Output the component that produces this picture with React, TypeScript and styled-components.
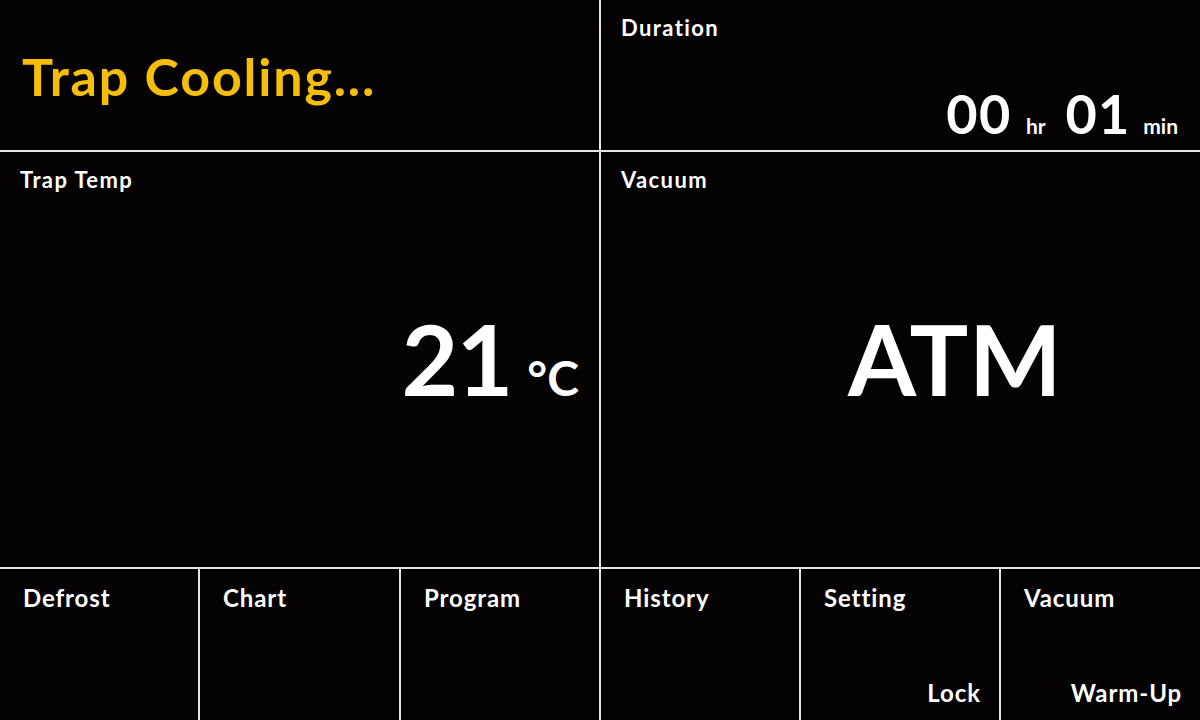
import styled, { createGlobalStyle } from 'styled-components';

const GlobalStyle = createGlobalStyle`
  html, body {
    margin: 0;
    padding: 0;
    background: #040203;
  }
  body {
    font-family: 'Lato', 'Noto Sans', sans-serif;
  }
`;

const Screen = styled.div`
  width: 1200px;
  height: 720px;
  display: grid;
  grid-template-columns: 599px 599px;
  grid-template-rows: 150px 415px 151px;
  gap: 2px;
  background: #e6e6e6;
  overflow: hidden;
`;

const Panel = styled.div<{ $bottom?: number }>`
  background: #040203;
  display: flex;
  flex-direction: column;
  padding: 15px 20px ${(p) => p.$bottom ?? 18}px 20px;
  box-sizing: border-box;
  color: #fff;
`;

const Label = styled.div`
  font-size: 22px;
  font-weight: 700;
  line-height: 1.2;
  letter-spacing: 1.4px;
`;

const Status = styled.div`
  flex: 1;
  display: flex;
  align-items: center;
  padding: 4px 0 0 2px;
  color: #f5bd0c;
  font-size: 52px;
  font-weight: 700;
  letter-spacing: 1.8px;
`;

const ReadingRow = styled.div`
  flex: 1;
  display: flex;
  align-items: baseline;
  justify-content: flex-end;
  align-content: flex-end;
  flex-wrap: wrap;
  line-height: 1;
`;

const Big = styled.span<{ $size: number; $spacing?: number }>`
  font-size: ${(p) => p.$size}px;
  font-weight: 700;
  letter-spacing: ${(p) => p.$spacing ?? 0}px;
`;

const Unit = styled.span<{ $size: number; $left: number; $right: number }>`
  font-size: ${(p) => p.$size}px;
  font-weight: 700;
  margin: 0 ${(p) => p.$right}px 0 ${(p) => p.$left}px;
`;

const Centered = styled.div<{ $pad: string }>`
  flex: 1;
  display: flex;
  align-items: center;
  justify-content: flex-end;
  padding: ${(p) => p.$pad};
`;

const TempValue = styled.div`
  display: flex;
  align-items: baseline;
  line-height: 1;
`;

const ButtonRow = styled.div`
  grid-column: 1 / span 2;
  display: grid;
  grid-template-columns: 198px 199px 198px 198px 198px 199px;
  gap: 2px;
`;

const Button = styled.div`
  background: #040203;
  color: #fff;
  display: flex;
  flex-direction: column;
  justify-content: space-between;
  padding: 15px 18px 12px 23px;
  box-sizing: border-box;
`;

const ButtonText = styled.div<{ $right?: boolean }>`
  font-size: 24px;
  font-weight: 700;
  line-height: 1.2;
  letter-spacing: 0.9px;
  text-align: ${(p) => (p.$right ? 'right' : 'left')};
`;

const buttons = [
  { title: 'Defrost' },
  { title: 'Chart' },
  { title: 'Program' },
  { title: 'History' },
  { title: 'Setting', sub: 'Lock' },
  { title: 'Vacuum', sub: 'Warm-Up' },
];

export default function App() {
  return (
    <>
      <GlobalStyle />
      <Screen>
        <Panel>
          <Status>Trap Cooling...</Status>
        </Panel>
        <Panel $bottom={9}>
          <Label>Duration</Label>
          <ReadingRow>
            <Big $size={54} $spacing={1.5}>00</Big>
            <Unit $size={21} $left={14} $right={20}>hr</Unit>
            <Big $size={54} $spacing={1}>01</Big>
            <Unit $size={21} $left={13} $right={2}>min</Unit>
          </ReadingRow>
        </Panel>
        <Panel>
          <Label>Trap Temp</Label>
          <Centered $pad="8px 0 34px 0">
            <TempValue>
              <Big $size={98} $spacing={-2}>21</Big>
              <Unit $size={48} $left={16} $right={0}>°C</Unit>
            </TempValue>
          </Centered>
        </Panel>
        <Panel>
          <Label>Vacuum</Label>
          <Centered $pad="8px 118px 34px 0">
            <Big $size={98} $spacing={0.5}>ATM</Big>
          </Centered>
        </Panel>
        <ButtonRow>
          {buttons.map((b) => (
            <Button key={b.title}>
              <ButtonText>{b.title}</ButtonText>
              {b.sub && <ButtonText $right>{b.sub}</ButtonText>}
            </Button>
          ))}
        </ButtonRow>
      </Screen>
    </>
  );
}
